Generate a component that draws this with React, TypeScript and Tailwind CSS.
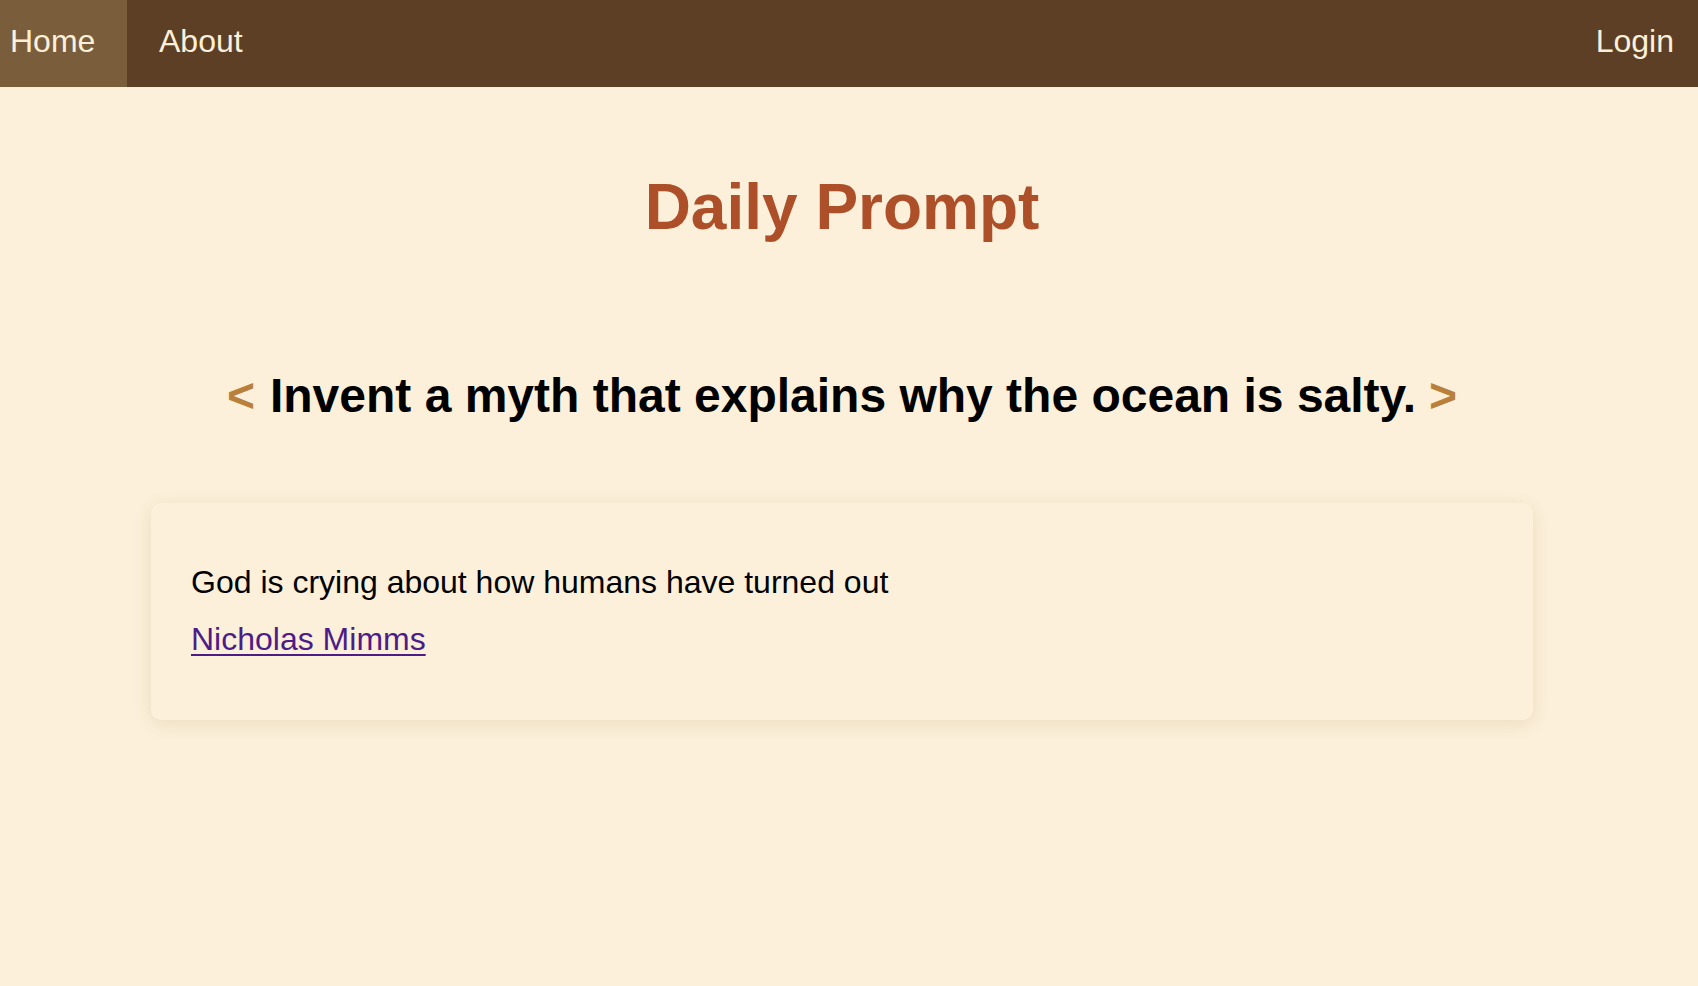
import React from "react";

export default function App() {
  return (
    <div
      className="min-h-[986px] w-full bg-[#fcf0da] text-black"
      style={{ fontFamily: '"Liberation Sans", Arial, sans-serif' }}
    >
      <nav className="flex h-[87px] w-full items-stretch bg-[#5c3f24] text-[32px] leading-[37px] text-[#fcf0da]">
        <a className="block h-full w-[127px] bg-[#7a5e3c] pl-[10px] pt-[23px]">Home</a>
        <a className="block h-full pl-[32px] pt-[23px]">About</a>
        <div className="flex-1" />
        <a className="block h-full pr-[24px] pt-[23px]">Login</a>
      </nav>
      <main className="flex w-[1684px] flex-col items-center">
        <h1 className="mt-[83px] text-[64px] font-bold leading-[74px] text-[#ad5029]">
          Daily Prompt
        </h1>
        <h2 className="mt-[124px] flex items-baseline text-[48px] font-bold leading-[55px]">
          <span className="text-[#b8803a]">&lt;</span>
          <span className="ml-[15px]">Invent a myth that explains why the ocean is salty.</span>
          <span className="ml-[13px] text-[#b8803a]">&gt;</span>
        </h2>
        <div className="mt-[80px] w-[1382px] rounded-[10px] bg-[#fcf0da] px-[40px] pb-[42px] pt-[41px] text-[32px] leading-[37px] shadow-[0_4px_18px_rgba(120,80,20,0.12)]">
          <p className="my-[20px]">God is crying about how humans have turned out</p>
          <p className="my-[20px]">
            <a className="text-[#4e1c88] underline decoration-[2px] underline-offset-[4px]">
              Nicholas Mimms
            </a>
          </p>
        </div>
      </main>
    </div>
  );
}
